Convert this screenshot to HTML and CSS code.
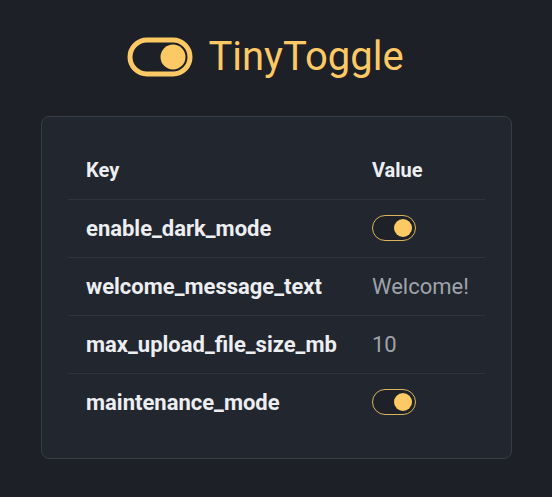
FILE: index.html
```html
<!DOCTYPE html>
<html lang="en">
<head>
    <meta charset="UTF-8">
    <meta name="viewport" content="width=device-width, initial-scale=1.0">
    <title>TinyToggle</title>
    <link rel="stylesheet" href="styles.css">
</head>
<body>
    <header class="brand">
        <svg class="brand-icon" width="66" height="40" viewBox="0 0 66 40">
            <rect x="3" y="3" width="60" height="34" rx="17" fill="none" stroke="#fdc964" stroke-width="5"/>
            <circle cx="46" cy="20" r="12.5" fill="#fdc964"/>
        </svg>
        <h1>TinyToggle</h1>
    </header>

    <section class="card">
        <table class="flags">
            <thead>
                <tr>
                    <th class="key-col">Key</th>
                    <th>Value</th>
                </tr>
            </thead>
            <tbody>
                <tr>
                    <td class="key">enable_dark_mode</td>
                    <td><span class="toggle on"></span></td>
                </tr>
                <tr>
                    <td class="key">welcome_message_text</td>
                    <td class="value">Welcome!</td>
                </tr>
                <tr>
                    <td class="key">max_upload_file_size_mb</td>
                    <td class="value">10</td>
                </tr>
                <tr>
                    <td class="key">maintenance_mode</td>
                    <td><span class="toggle on"></span></td>
                </tr>
            </tbody>
        </table>
    </section>
</body>
</html>
```

FILE: styles.css
```css
*{
    box-sizing: border-box;
}

body{
    background-color: #1d2027;
    margin: 0;
    padding: 35px 40px 0 41px;
    font-family: Roboto, "Liberation Sans", sans-serif;
    color: #eceef2;
}

.brand{
    display: flex;
    justify-content: center;
    align-items: center;
    gap: 15px;
    padding-right: 22px;
    margin-bottom: 37px;
}

.brand-icon{
    display: block;
}

.brand h1{
    margin: 0;
    font-size: 40px;
    font-weight: 400;
    color: #fdc964;
    line-height: 44px;
}

.card{
    width: 471px;
    background-color: #22262e;
    border: 1px solid #383c45;
    border-radius: 8px;
    padding: 24px 26px 27px 26px;
}

.flags{
    width: 100%;
    border-collapse: collapse;
    table-layout: fixed;
}

.flags th,
.flags td{
    text-align: left;
    padding: 0 18px;
    height: 58px;
    font-size: 20px;
    border-bottom: 1px solid #2f333b;
    white-space: nowrap;
}

.flags tbody tr:last-child td{
    border-bottom: none;
}

.flags th{
    font-weight: 700;
    color: #eceef2;
}

.key-col{
    width: 286px;
}

.key{
    font-weight: 700;
    font-size: 22px !important;
}

.value{
    color: #9ea3ab;
    font-size: 22px !important;
}

.toggle{
    display: block;
    position: relative;
    width: 44px;
    height: 26px;
    border: 1.5px solid #d9b65c;
    border-radius: 13px;
    background-color: #1e2128;
}

.toggle.on::after{
    content: "";
    position: absolute;
    top: 2.5px;
    right: 3.5px;
    width: 18px;
    height: 18px;
    border-radius: 50%;
    background-color: #fdc964;
}
```
